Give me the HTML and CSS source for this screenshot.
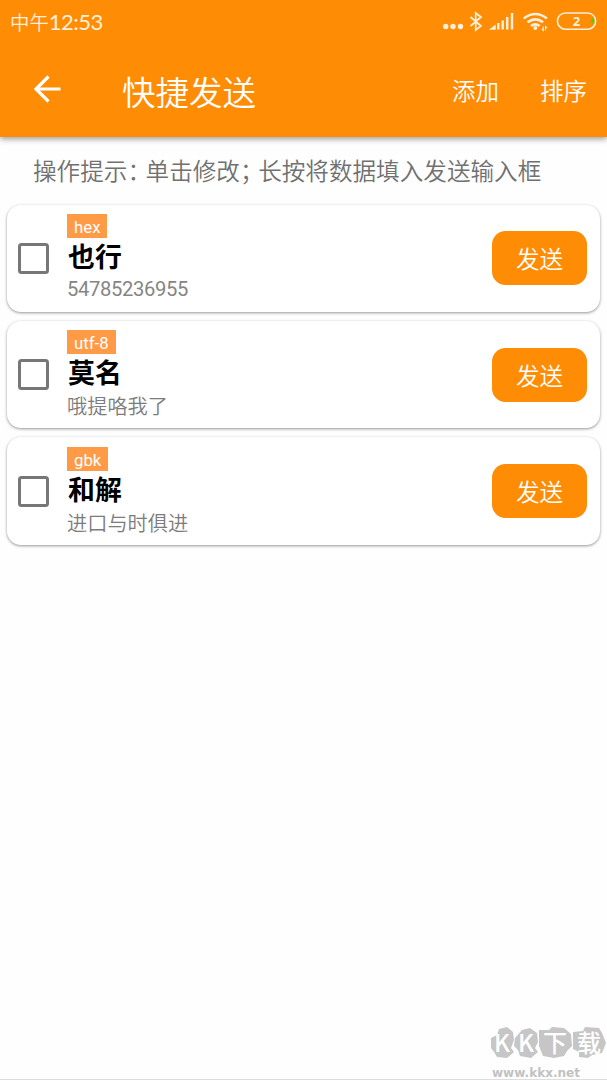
FILE: index.html
```html
<!DOCTYPE html>
<html lang="zh-CN">
<head>
<meta charset="utf-8">
<title>快捷发送</title>
<link rel="stylesheet" href="styles.css">
</head>
<body>
<header class="top">
  <div class="status">
    <span class="clock">中午<span class="digits">12:53</span></span>
    <svg class="status-icons" width="160" height="24" viewBox="0 0 160 24" fill="none" stroke="#fff0dc">
      <g fill="#fff0dc" stroke="none"><circle cx="5.700" cy="16.500" r="2.700"/><circle cx="13" cy="16.500" r="2.700"/><circle cx="20.500" cy="16.500" r="2.700"/></g>
      <path d="M30.500 7L41 16L35.700 20V3L41 7L30.500 16" stroke-width="1.700"/>
      <path d="M52.500 18.500L54.500 17V18.500ZM58.300 19.500V13M62.700 19.500V10.500M67.200 19.500V7M72 19.500V3" stroke-width="2.400"/>
      <path d="M83.700 8.500Q95.300-.5 106.900 8.500M87.500 12.300Q95.300 6.400 103.100 12.300M90.900 16Q95.300 12.800 99.700 16" stroke-width="2.600"/>
      <circle cx="95.300" cy="18" r="2" fill="#fff0dc" stroke="none"/>
      <path d="M103.300 16.500V20.500L101.800 19M105.500 20.500V16.500L107 18" stroke-width="1.100"/>
      <rect x="117.500" y="3" width="38" height="16.200" rx="7.800" stroke-width="1.600"/>
      <path d="M154.300 8.500H153Q151.300 8.500 151.300 10.500V11.500Q151.300 13.500 153 13.500H154.300Z" fill="#62c80d" stroke="none"/>
      <text class="battery" x="136.500" y="15.600" text-anchor="middle">2</text>
    </svg>
  </div>
  <div class="toolbar">
    <svg class="back" width="30" height="28" viewBox="0 0 30 28" fill="none" stroke="#fff" stroke-width="3.200"><path d="M28.500 14H4M16.500 1.500L4 14L16.500 26.500"/></svg>
    <h1 class="title">快捷发送</h1>
    <nav class="actions"><span>添加</span><span>排序</span></nav>
  </div>
</header>
<main>
  <p class="hint">操作提示<span class="punct">：</span>单击修改<span class="punct">；</span>长按将数据填入发送输入框</p>
  <section class="list">
    <article class="card">
      <span class="check"></span>
      <div class="info"><span class="tag">hex</span><h2 class="name">也行</h2><p class="data number">54785236955</p></div>
      <button class="send">发送</button>
    </article>
    <article class="card">
      <span class="check"></span>
      <div class="info"><span class="tag">utf-8</span><h2 class="name">莫名</h2><p class="data">哦提咯我了</p></div>
      <button class="send">发送</button>
    </article>
    <article class="card">
      <span class="check"></span>
      <div class="info"><span class="tag">gbk</span><h2 class="name">和解</h2><p class="data">进口与时俱进</p></div>
      <button class="send">发送</button>
    </article>
  </section>
</main>
<footer class="mark">
  <svg width="118" height="56" viewBox="0 0 118 56">
    <g fill="#c6c6c6">
      <path d="M2 14L8 11L10 5L18 3L24 8L25 16L22 24L25 28L18 34L8 33L5 28L2 24Z"/>
      <path d="M26 14L33 6L41 4L48 9L49 18L46 24L49 28L42 34L31 32L29 26L25 22Z"/>
      <path d="M50 6L60 6L63 3L75 4L82 10L83 22L78 27L75 32L65 34L54 32L50 22Z"/>
      <path d="M84 8L94 7L96 3L110 4L113 9L117 19L113 29L103 31L99 34L90 33L90 28L84 25Z"/>
    </g>
    <g class="mark-name"><text x="5" y="28" textLength="16" lengthAdjust="spacingAndGlyphs">K</text><text x="29" y="28" textLength="16" lengthAdjust="spacingAndGlyphs">K</text><text x="54" y="28">下</text><text x="88" y="28">载</text></g>
    <text class="mark-url" x="3" y="53" textLength="88" lengthAdjust="spacingAndGlyphs">www.kkx.net</text>
  </svg>
</footer>
</body>
</html>
```

FILE: styles.css
```css
* { box-sizing: border-box; }
body {
  margin: 0;
  min-height: 1080px;
  display: flex;
  flex-direction: column;
  background: #fefefe;
  font-family: Roboto, "Noto Sans CJK SC", sans-serif;
}
h1, h2, p { margin: 0; font-weight: 400; }
.top {
  height: 137px;
  background: #ff8c05;
  color: #fff;
  box-shadow: 0 2px 6px rgba(0, 0, 0, .4);
}
.status {
  height: 45px;
  padding: 0 7px 0 10px;
  display: flex;
  justify-content: space-between;
}
.clock {
  font: 350 19.400px/44px "Noto Sans CJK SC", sans-serif;
  color: #fff0dc;
  white-space: nowrap;
}
.digits { font: 400 22px/44px Lato, sans-serif; letter-spacing: -.500px; }
.status-icons { margin-top: 10px; }
.battery { font: 700 13px "Noto Sans", sans-serif; fill: #fff0dc; stroke: none; }
.toolbar {
  height: 91px;
  padding: 0 20px 0 32px;
  display: flex;
  align-items: center;
}
.back { margin-bottom: 3px; }
.title { margin: 0 0 0 60px; font-size: 33.500px; line-height: 48px; font-weight: 350; }
.actions { margin: 0 0 1px auto; display: flex; gap: 41px; font-size: 23.500px; line-height: 36px; font-weight: 350; }
.title, .actions, .hint, .data, .send { font-family: "Noto Sans CJK SC", sans-serif; }
.hint {
  height: 67.500px;
  padding: 1px 0 0 33px;
  font-size: 23.600px;
  line-height: 64px;
  font-weight: 350;
  white-space: nowrap;
  color: #707070;
}
.punct { letter-spacing: -5.400px; }
.list { padding: 0 7px; display: flex; flex-direction: column; gap: 8.800px; }
.card {
  height: 107.600px;
  padding: 0 13px 0 11px;
  display: flex;
  align-items: center;
  border-radius: 14px;
  background: #fff;
  box-shadow: 0 1px 3px rgba(0, 0, 0, .42);
}
.check { width: 31px; height: 31px; border: 3.400px solid #777; border-radius: 3.500px; }
.info { height: 100%; margin-left: 18px; padding-top: 9.600px; flex: 1; }
.tag {
  display: block;
  width: fit-content;
  height: 24px;
  padding: 0 7px;
  background: #ff9a47;
  color: #fff;
  font-size: 16.800px;
  line-height: 26px;
}
.name { padding: 1px 0 0 1px; font-size: 26.900px; line-height: 38px; font-weight: 700; color: #000; }
.data { font-size: 20.200px; line-height: 26px; font-weight: 350; color: #7c7c7c; }
.number { margin-top: -1px; font-family: Roboto, sans-serif; font-weight: 400; letter-spacing: -.340px; color: #858585; }
.send {
  width: 95px;
  height: 54px;
  padding: 0;
  border: 0;
  border-radius: 13.500px;
  background: #ff8c05;
  color: #fff;
  font-size: 23.600px;
  font-weight: 350;
  line-height: 54px;
}
.mark { height: 56px; margin-top: auto; padding-left: 489px; border-bottom: 1px solid #ddd; }
.mark svg { display: block; }
.mark-name { font: 500 24px "Noto Sans CJK SC", sans-serif; fill: #fff; }
.mark-url { font: 700 12px "DejaVu Sans", sans-serif; fill: #c2c2c2; }
```
